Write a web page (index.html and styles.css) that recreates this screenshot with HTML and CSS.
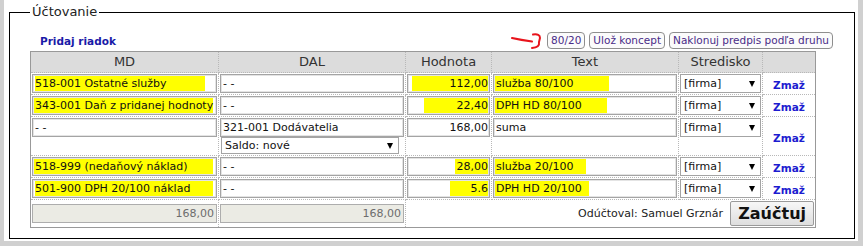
FILE: index.html
```html
<!DOCTYPE html>
<html>
<head>
    <meta charset="utf-8">
    <title>Účtovanie</title>
    <link rel="stylesheet" href="styles.css">
</head>
<body>
    <div class="page">
        <fieldset class="box">
            <legend>Účtovanie</legend>
            <div class="toolbar">
                <a class="add-row" href="#">Pridaj riadok</a>
                <div class="actions">
                    <svg class="scribble" width="32" height="18" viewBox="0 0 32 18">
                        <path d="M1 6 Q10 8 21 9.5" />
                        <path d="M22 2.5 Q29 1.5 29 6 L28 10 Q29 15.5 21 16" />
                    </svg>
                    <button class="small-btn">80/20</button>
                    <button class="small-btn">Ulož koncept</button>
                    <button class="small-btn">Naklonuj predpis podľa druhu</button>
                </div>
            </div>
            <table class="entries">
                <tr>
                    <th class="c-md">MD</th>
                    <th class="c-dal">DAL</th>
                    <th class="c-val">Hodnota</th>
                    <th class="c-text">Text</th>
                    <th class="c-center">Stredisko</th>
                    <th class="c-del"></th>
                </tr>
                <tr>
                    <td><input class="field hl" style="--x:2px;--w:170px" value="518-001 Ostatné služby"></td>
                    <td><input class="field" value="- -"></td>
                    <td><input class="field num hl" style="--x:4px;--w:84px" value="112,00"></td>
                    <td><input class="field hl" style="--x:0px;--w:115px" value="služba 80/100"></td>
                    <td><span class="pick"><select><option>[firma]</option></select></span></td>
                    <td class="del-cell"><a class="del" href="#">Zmaž</a></td>
                </tr>
                <tr>
                    <td><input class="field hl" style="--x:0px;--w:180px" value="343-001 Daň z pridanej hodnoty"></td>
                    <td><input class="field" value="- -"></td>
                    <td><input class="field num hl" style="--x:16px;--w:70px" value="22,40"></td>
                    <td><input class="field hl" style="--x:0px;--w:113px" value="DPH HD 80/100"></td>
                    <td><span class="pick"><select><option>[firma]</option></select></span></td>
                    <td class="del-cell"><a class="del" href="#">Zmaž</a></td>
                </tr>
                <tr>
                    <td><input class="field" value="- -"></td>
                    <td>
                        <input class="field" value="321-001 Dodávatelia">
                        <span class="pick saldo"><select><option>Saldo: nové</option></select></span>
                    </td>
                    <td><input class="field num" value="168,00"></td>
                    <td><input class="field" value="suma"></td>
                    <td><span class="pick"><select><option>[firma]</option></select></span></td>
                    <td class="del-cell"><a class="del" href="#">Zmaž</a></td>
                </tr>
                <tr>
                    <td><input class="field hl" style="--x:0px;--w:180px" value="518-999 (nedaňový náklad)"></td>
                    <td><input class="field" value="- -"></td>
                    <td><input class="field num hl" style="--x:47px;--w:40px" value="28,00"></td>
                    <td><input class="field hl" style="--x:0px;--w:92px" value="služba 20/100"></td>
                    <td><span class="pick"><select><option>[firma]</option></select></span></td>
                    <td class="del-cell"><a class="del" href="#">Zmaž</a></td>
                </tr>
                <tr>
                    <td><input class="field hl" style="--x:2px;--w:178px" value="501-900 DPH 20/100 náklad"></td>
                    <td><input class="field" value="- -"></td>
                    <td><input class="field num hl" style="--x:42px;--w:45px" value="5.6"></td>
                    <td><input class="field hl" style="--x:0px;--w:95px" value="DPH HD 20/100"></td>
                    <td><span class="pick"><select><option>[firma]</option></select></span></td>
                    <td class="del-cell"><a class="del" href="#">Zmaž</a></td>
                </tr>
                <tr class="totals">
                    <td><input class="field num off" value="168,00" disabled></td>
                    <td><input class="field num off" value="168,00" disabled></td>
                    <td colspan="4" class="foot">
                        <span class="who">Odúčtoval: Samuel Grznár</span>
                        <button class="post">Zaúčtuj</button>
                    </td>
                </tr>
            </table>
        </fieldset>
    </div>
</body>
</html>
```

FILE: styles.css
```css
body {
    margin: 0;
    background: #d0d0d0;
    font-family: "DejaVu Sans", Verdana, sans-serif;
    color: #222;
}

.page {
    background: #fff;
    margin-left: 4px;
    width: 854px;
    height: 241px;
    padding-top: 4px;
    box-sizing: border-box;
    overflow: hidden;
}

.box {
    margin: 0 3px 0 5px;
    padding: 12px 21px 10px 20px;
    border: 1px solid #000;
    min-width: 0;
}

.box legend {
    padding: 0 2px;
    font-size: 13px;
    line-height: 16px;
    color: #222;
}

.toolbar {
    display: flex;
    justify-content: space-between;
    align-items: center;
    height: 17px;
    margin-bottom: 2px;
}

.add-row {
    margin-left: 10px;
    font-size: 10.5px;
    font-weight: bold;
    color: #1a1aa8;
    text-decoration: none;
}

.actions {
    position: relative;
    display: flex;
    gap: 4px;
}

.scribble {
    position: absolute;
    left: -36px;
    top: 0;
    fill: none;
    stroke: #e8141c;
    stroke-width: 2;
    stroke-linecap: round;
}

.small-btn {
    height: 17px;
    padding: 0 3px;
    border: 1px solid #8e8e8e;
    border-radius: 4px;
    background: #fbfbfb;
    font-family: "DejaVu Sans", Verdana, sans-serif;
    font-size: 10.5px;
    line-height: 15px;
    color: #4a2c88;
}

.entries {
    width: 786px;
    table-layout: fixed;
    border-collapse: separate;
    border-spacing: 0;
    border: 1px solid #999;
}

.entries th,
.entries td {
    box-sizing: border-box;
    border-right: 1px dotted #b8b8b8;
    border-bottom: 1px dotted #b8b8b8;
}

.entries th:last-child,
.entries td:last-child {
    border-right: none;
}

.entries .totals td {
    border-bottom: none;
}

.entries th {
    background: #dcdcdc;
    padding: 0;
    font-size: 13px;
    font-weight: normal;
    line-height: 20px;
    color: #333;
}

.c-md { width: 188px; }
.c-dal { width: 187px; }
.c-val { width: 86px; }
.c-text { width: 187px; }
.c-center { width: 84px; }
.c-del { width: 52px; }

.entries td {
    padding: 1px;
    vertical-align: top;
}

.field {
    display: block;
    width: 100%;
    height: 19px;
    box-sizing: border-box;
    margin: 0;
    padding: 0 2px;
    border: 1px solid #a4a4a4;
    box-shadow: inset 0 0 0 1px #e4e4e4;
    background: #fff;
    font-family: "DejaVu Sans", Verdana, sans-serif;
    font-size: 11px;
    color: #111;
}

.field.num {
    text-align: right;
    padding-right: 1px;
}

.hl {
    background-image: linear-gradient(#ffff00, #ffff00);
    background-repeat: no-repeat;
    background-position: var(--x) 0;
    background-size: var(--w) 100%;
}

.field.off {
    background: #ebebe4;
    color: #6d6d6d;
    border-color: #adadad;
    box-shadow: none;
    padding-right: 2px;
}

.pick {
    position: relative;
    display: block;
}

.pick::after {
    content: "";
    position: absolute;
    right: 6px;
    top: 50%;
    margin-top: -3px;
    border-left: 3.5px solid transparent;
    border-right: 3.5px solid transparent;
    border-top: 6px solid #000;
}

.pick select {
    -webkit-appearance: none;
    appearance: none;
    display: block;
    width: 100%;
    height: 19px;
    margin: 0;
    padding: 0 3px;
    border: 1px solid #a4a4a4;
    border-radius: 0;
    background: #fff;
    font-family: "DejaVu Sans", Verdana, sans-serif;
    font-size: 11px;
    color: #111;
}

.pick.saldo {
    width: 178px;
    margin-left: 1px;
}

.pick.saldo select {
    height: 17px;
}

.entries td.del-cell {
    text-align: center;
    vertical-align: middle;
}

.del {
    font-size: 10.5px;
    font-weight: bold;
    color: #1c1cd0;
    text-decoration: none;
}

.entries .totals td {
    vertical-align: middle;
}

.entries td.foot {
    text-align: right;
}

.who {
    font-size: 11px;
    color: #222;
    margin-right: 2px;
    vertical-align: middle;
}

.post {
    height: 25px;
    padding: 0 7px;
    border: 1px solid #9a9a9a;
    border-radius: 2px;
    background: linear-gradient(#f7f7f7, #dedede);
    font-family: "DejaVu Sans", Verdana, sans-serif;
    font-size: 16px;
    font-weight: bold;
    color: #111;
    vertical-align: middle;
}
```
